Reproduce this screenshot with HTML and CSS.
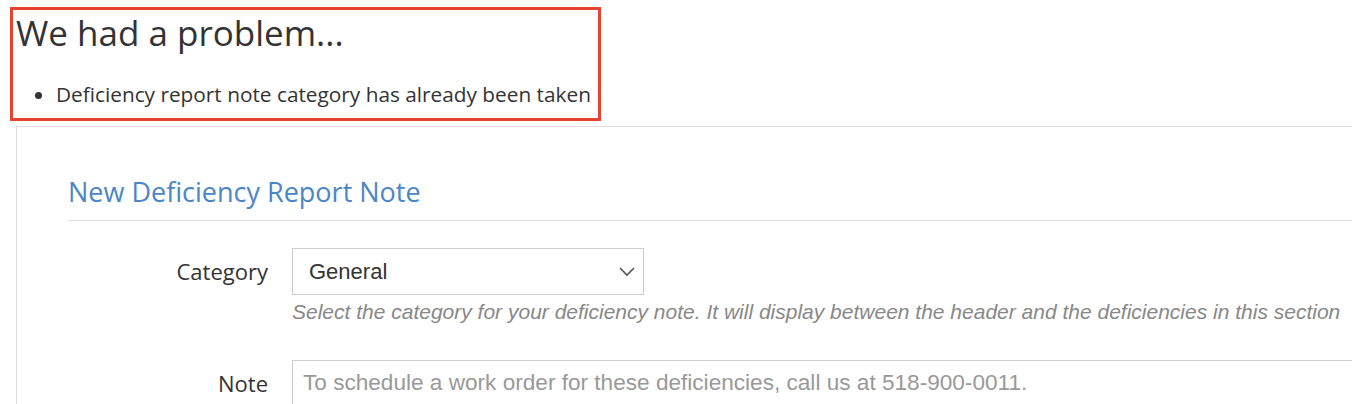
FILE: index.html
```html
<!DOCTYPE html>
<html lang="en">

<head>
    <meta charset="UTF-8">
    <meta name="viewport" content="width=device-width, initial-scale=1.0">
    <title>New Deficiency Report Note</title>
    <link rel="stylesheet" href="styles.css">
</head>

<body>
    <div class="error-box">
        <h1>We had a problem...</h1>
        <ul>
            <li>Deficiency report note category has already been taken</li>
        </ul>
    </div>

    <div class="card">
        <h2 class="card-title">New Deficiency Report Note</h2>

        <div class="form-row">
            <label class="form-label" for="category">Category</label>
            <div class="form-field">
                <div class="select-box">
                    <span>General</span>
                    <svg width="18" height="12" viewBox="0 0 18 12">
                        <path d="M2 2 L9 9 L16 2" fill="none" stroke="#555" stroke-width="1.6" />
                    </svg>
                </div>
                <p class="help-text">Select the category for your deficiency note. It will display between the header and the deficiencies in this section</p>
            </div>
        </div>

        <div class="form-row">
            <label class="form-label" for="note">Note</label>
            <div class="form-field">
                <div class="textarea-box">To schedule a work order for these deficiencies, call us at 518-900-0011.</div>
            </div>
        </div>
    </div>
</body>

</html>
```

FILE: styles.css
```css
* {
    margin: 0;
    padding: 0;
    box-sizing: border-box;
}

body {
    font-family: "Open Sans", sans-serif;
    color: #333;
    background: #fff;
    overflow: hidden;
    width: 1352px;
    height: 404px;
}

.error-box {
    margin: 7px 0 0 10px;
    width: 591px;
    height: 114px;
    border: 3px solid #e5432d;
    padding: 0 0 0 3px;
}

.error-box h1 {
    font-size: 35px;
    font-weight: 400;
    line-height: 46px;
}

.error-box ul {
    margin-top: 24px;
    padding-left: 40px;
    font-size: 20.8px;
    line-height: 28px;
}

.card {
    margin: 5px 0 0 16px;
    width: 1400px;
    height: 278px;
    border: 1px solid #ddd;
    border-bottom: none;
    padding: 48px 0 0 51px;
}

.card-title {
    font-size: 27px;
    font-weight: 400;
    color: #4b86c6;
    line-height: 34px;
    padding-bottom: 11px;
    border-bottom: 1px solid #d6e1ec;
}

.form-row {
    display: flex;
    gap: 24px;
    margin-top: 27px;
}

.form-row + .form-row {
    margin-top: 36px;
}

.form-label {
    width: 200px;
    text-align: right;
    font-size: 22px;
    line-height: 47px;
    color: #333;
}

.form-field {
    flex: 1;
}

.select-box {
    width: 352px;
    height: 47px;
    border: 1px solid #ccc;
    display: flex;
    align-items: center;
    justify-content: space-between;
    padding: 0 7px 0 16px;
    font-family: "Liberation Sans", Arial, sans-serif;
    font-size: 22px;
    color: #333;
}

.help-text {
    font-family: "Liberation Sans", Arial, sans-serif;
    font-style: italic;
    font-size: 21px;
    line-height: 24px;
    color: #888;
    margin-top: 5px;
}

.textarea-box {
    border: 1px solid #ccc;
    border-bottom: none;
    height: 45px;
    padding: 9px 10px;
    font-family: "Liberation Sans", Arial, sans-serif;
    font-size: 22.6px;
    color: #999;
}
```
